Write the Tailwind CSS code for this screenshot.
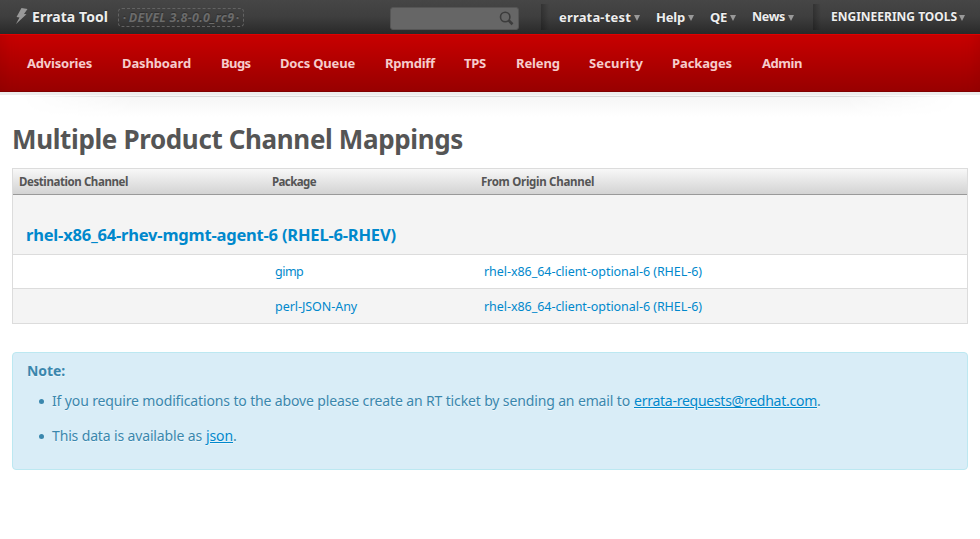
<!DOCTYPE html>
<html lang="en">
<head>
<meta charset="utf-8">
<title>Errata Tool</title>
<script src="https://cdn.jsdelivr.net/npm/@tailwindcss/browser@4"></script>
</head>
<body class="h-[539px] overflow-hidden bg-white font-['Noto_Sans','Open_Sans',sans-serif] whitespace-nowrap text-[#555]">
<header>
  <div class="flex h-[34px] items-center bg-linear-to-b from-[#464646] via-[#3e3e3e] to-[#292929] text-[13px] font-bold leading-[20px] text-[#eee] [text-shadow:0_-1px_1px_rgb(0_0_0/0.3)]">
    <svg class="-mt-[2px] ml-[15px] h-[18px] w-[13px] shrink-0" viewBox="0 0 13 18"><path d="M6.500 1L12.500 2L9 7L11.500 7.300L1 17L4.500 10.500L1.500 10Z" fill="#999"/></svg>
    <span class="w-[90px] pl-[4px] text-[14px] tracking-[0.06px]">Errata Tool</span>
    <span class="mt-px flex h-[19px] w-[126px] shrink-0 items-center justify-center rounded-[4px] border border-dashed border-[#636363] text-[12.5px] text-[#6b6b6b]"><span class="w-[6px]">·</span><i class="w-[107px] tracking-[0.28px]">DEVEL 3.8-0.0_rc9</i><span>·</span></span>
    <span class="ml-[146px] mt-[3px] flex h-[23px] w-[129px] shrink-0 items-center justify-end rounded-[3px] border border-[#555] bg-[#666] pr-[4px]">
      <svg class="size-[15px]" viewBox="0 0 15 15" fill="none" stroke="#3c3c3c"><circle cx="6.200" cy="6" r="4.700" stroke-width="1.600"/><path d="M9.700 9.500L13.500 13.200" stroke-width="2.600"/></svg>
    </span>
    <span class="ml-[22px] h-[26px] w-[8px] shrink-0 bg-linear-to-r from-black/25 to-transparent"></span>
    <nav class="flex pl-[10px]">
      <span class="flex w-[97px] items-center gap-[3px] tracking-[0.17px]">errata-test<svg class="mt-px size-[6px]" viewBox="0 0 6 6"><path d="M0 0H6L3 6Z" fill="#999"/></svg></span>
      <span class="flex w-[54px] items-center gap-[3px] tracking-[-0.2px]">Help<svg class="mt-px size-[6px]" viewBox="0 0 6 6"><path d="M0 0H6L3 6Z" fill="#999"/></svg></span>
      <span class="flex w-[42px] items-center gap-[3px] tracking-[-0.29px]">QE<svg class="mt-px size-[6px]" viewBox="0 0 6 6"><path d="M0 0H6L3 6Z" fill="#999"/></svg></span>
      <span class="flex w-[61px] items-center gap-[3px] text-[12.5px] tracking-[-0.32px]">News<svg class="mt-px size-[6px]" viewBox="0 0 6 6"><path d="M0 0H6L3 6Z" fill="#999"/></svg></span>
    </nav>
    <span class="h-[26px] w-[8px] shrink-0 bg-linear-to-r from-black/25 to-transparent"></span>
    <span class="flex items-center gap-[2px] pl-[10px] text-[12px]">ENGINEERING TOOLS<svg class="mt-px size-[6px]" viewBox="0 0 6 6"><path d="M0 0H6L3 6Z" fill="#999"/></svg></span>
  </div>
  <nav class="flex h-[58px] items-center border-t border-b border-t-[#e00000] border-b-[#800000] bg-linear-to-b from-[#c80000] to-[#980000] pt-[2px] pl-[27px] text-[13px] font-bold text-[#f6cccc] shadow-[inset_18px_0_16px_-16px_rgb(120_0_0/0.25),inset_-18px_0_16px_-16px_rgb(120_0_0/0.25)]">
    <span class="w-[95px] tracking-[-0.21px]">Advisories</span>
    <span class="w-[99px] tracking-[-0.13px]">Dashboard</span>
    <span class="w-[59px] tracking-[-0.6px]">Bugs</span>
    <span class="w-[105px] tracking-[-0.2px]">Docs Queue</span>
    <span class="w-[79px] tracking-[-0.24px]">Rpmdiff</span>
    <span class="w-[52px] tracking-[-0.25px]">TPS</span>
    <span class="w-[73px] tracking-[-0.1px]">Releng</span>
    <span class="w-[83px] tracking-[0.14px]">Security</span>
    <span class="w-[90px] tracking-[-0.11px]">Packages</span>
    <span class="tracking-[-0.45px]">Admin</span>
  </nav>
  <div class="h-[3px] bg-[#ececec]"></div>
  <div class="h-[25px] bg-linear-to-b from-[#f5f5f5] to-white to-90% pt-px [mask-image:linear-gradient(to_right,transparent_2%,black_14%,black_86%,transparent_98%)]">
    <div class="h-px bg-[#dadada]"></div>
  </div>
</header>
<main class="px-3">
  <h1 class="flex h-[48px] items-center pb-[10px] text-[26px] leading-[36px] font-bold tracking-[-0.366px]">Multiple Product Channel Mappings</h1>
  <div class="border border-[#dcdcdc]">
    <div class="grid h-[26px] grid-cols-[253px_209px_1fr] items-center border-b border-[#999] bg-linear-to-b from-[#f8f8f8] to-[#d3d3d3] pt-px pl-[6px] text-[11.5px] leading-[16px] font-bold">
      <span class="tracking-[-0.42px]">Destination Channel</span>
      <span class="tracking-[-0.58px]">Package</span>
      <span class="tracking-[-0.28px]">From Origin Channel</span>
    </div>
    <div class="h-[60px] border-b border-[#dcdcdc] bg-[#f4f4f4] pt-[28px] pl-[13px] text-[16.5px] leading-[24px] font-bold tracking-[-0.2px] text-[#0088cc]">rhel-x86_64-rhev-mgmt-agent-6 (RHEL-6-RHEV)</div>
    <div class="grid h-[34px] grid-cols-[209px_1fr] items-center border-b border-[#dcdcdc] pt-[2px] pl-[262px] text-[12.5px] tracking-[-0.05px] text-[#0088cc]">
      <a class="tracking-[-0.5px]">gimp</a><a>rhel-x86_64-client-optional-6 (RHEL-6)</a>
    </div>
    <div class="grid h-[34px] grid-cols-[209px_1fr] items-center bg-[#f4f4f4] pt-[2px] pl-[262px] text-[12.5px] tracking-[-0.05px] text-[#0088cc]">
      <a>perl-JSON-Any</a><a>rhel-x86_64-client-optional-6 (RHEL-6)</a>
    </div>
  </div>
  <section class="mt-[28px] h-[118px] rounded-[4px] border border-[#bce8f1] bg-[#d9edf7] px-[14px] pt-[8px] text-[14px] leading-[20px] text-[#3a87ad] [text-shadow:0_1px_0_rgb(255_255_255/0.5)]">
    <b class="block tracking-[-0.1px]">Note:</b>
    <ul class="mt-[10px] flex flex-col gap-[15px]">
      <li class="flex items-center"><span class="mr-[8px] ml-[12px] size-[5px] rounded-full bg-[#3a87ad]"></span><span class="w-[582px] tracking-[-0.136px]">If you require modifications to the above please create an RT ticket by sending an email to</span><a class="tracking-[-0.257px] text-[#0088cc] underline">errata-requests@redhat.com</a>.</li>
      <li class="flex items-center"><span class="mr-[8px] ml-[12px] size-[5px] rounded-full bg-[#3a87ad]"></span><span class="w-[154px] tracking-[-0.144px]">This data is available as</span><a class="tracking-[-0.11px] text-[#0088cc] underline">json</a>.</li>
    </ul>
  </section>
</main>
</body>
</html>
